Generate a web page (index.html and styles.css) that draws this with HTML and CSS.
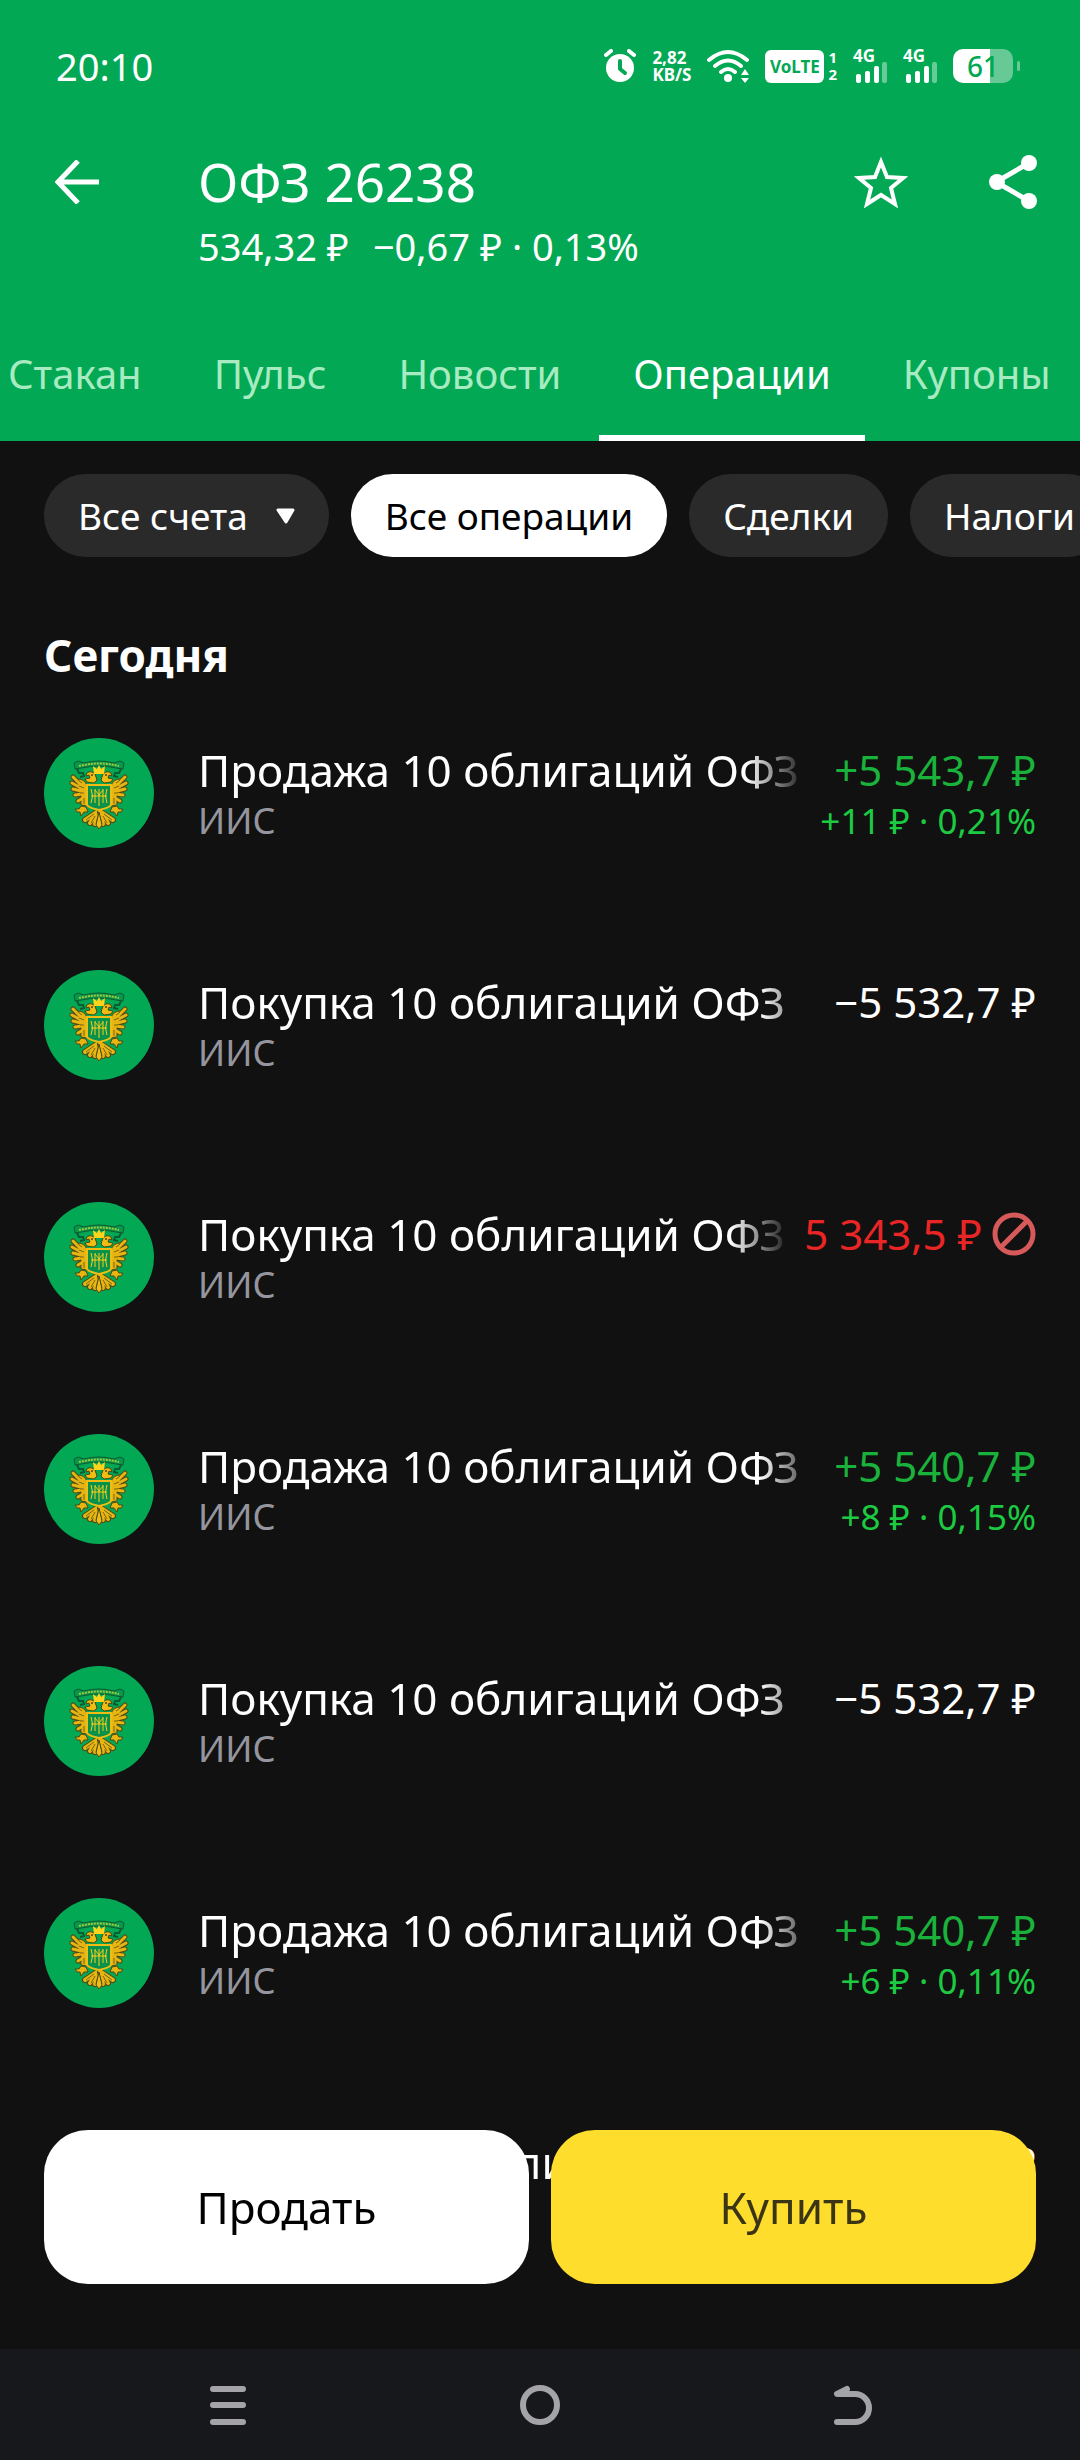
FILE: index.html
```html
<!DOCTYPE html>
<html lang="ru">
<head>
    <meta charset="UTF-8">
    <meta name="viewport" content="width=device-width, initial-scale=1.0">
    <title>ОФЗ 26238</title>
    <link rel="stylesheet" href="styles.css">
</head>

<body>

    <!-- shared icons -->
    <svg class="sprite" width="0" height="0" aria-hidden="true">
        <symbol id="emblem" viewBox="0 0 110 110">
            <circle cx="55" cy="55" r="55" fill="#03a854"/>
            <!-- ribbon -->
            <path d="M30 25l4-2 6 2q15-4 30 0l6-2 4 2-1 6-7-1q-17-4-34 0l-7 1z" fill="#08984c" stroke="#0c5a30" stroke-width="1"/>
            <path d="M35 28q20-5 40 0" fill="none" stroke="#a5c43a" stroke-width="2" stroke-dasharray="2 1"/>
            <g id="half">
                <path d="M33 31l2 4 4 0 1 3-4 1" fill="none" stroke="#0c5a30" stroke-width="2"/>
                <!-- wing feathers -->
                <path d="M37 47L29 39M37 50L28 45M37 53L29 51M38 56L31 57M39 60L34 63" stroke="#4d4a15" stroke-width="5" stroke-linecap="round"/>
                <path d="M34 41q7 0 9 7v20l-6-1 0-12-3-6z" fill="#e7b512" stroke="#4d4a15" stroke-width="1"/>
                <path d="M37 47L29 39M37 50L28 45M37 53L29 51M38 56L31 57M39 60L34 63" stroke="#e7b512" stroke-width="3" stroke-linecap="round"/>
                <path d="M38 45l-4-3M40 50l-5-2M40 55l-4 0M40 60v6" stroke="#756710" stroke-width="1"/>
                <!-- head -->
                <path d="M43 35q4-3 8 1l2 6-3 3-7-1-2-3 5-1-1-3-3 1z" fill="#f1bd12" stroke="#4d4a15" stroke-width="1"/>
                <circle cx="48" cy="37" r="1" fill="#4d4a15"/>
                <!-- claw -->
                <path d="M42 69l-5-1-2 3-4 0 2 3 3 0 1 4 3-4 4 0z" fill="#e7b512" stroke="#4d4a15" stroke-width="1"/>
                <!-- tail -->
                <path d="M53 74L41 82M53 74L46 85M54 74L51 86" stroke="#4d4a15" stroke-width="6" stroke-linecap="round"/>
                <path d="M53 74L41 82M53 74L46 85M54 74L51 86" stroke="#e7b512" stroke-width="4" stroke-linecap="round"/>
                <path d="M50 76l-8 6M51 78l-4 7M54 78l-2 8" stroke="#756710" stroke-width="1"/>
            </g>
            <use href="#half" transform="translate(110) scale(-1 1)"/>
            <path d="M55 74l3 13-3 4-3-4z" fill="#f0bd14" stroke="#4d4a15" stroke-width="1"/>
            <!-- crown -->
            <path d="M50 36l-1-8 4 3 2-4 2 4 4-3-1 8z" fill="#ffd21c"/>
            <!-- shield -->
            <path d="M43 47h24v20q-2 3-12 5-10-2-12-5z" fill="#07914a" stroke="#f0bd14" stroke-width="2"/>
            <path d="M47 51q3 7 0 14M63 51q-3 7 0 14M51 51v14M59 51v14M55 51v17M47 58h16M51 52l4 5 4-5" fill="none" stroke="#ffce1a" stroke-width="1"/>
        </symbol>
        <symbol id="signal" viewBox="0 0 34 34">
            <rect x="3" y="25" width="5" height="9" rx="2"/>
            <rect x="12" y="22" width="5" height="12" rx="2"/>
            <rect x="21" y="17" width="5" height="17" rx="2"/>
            <rect x="29" y="13" width="5" height="21" rx="2" opacity="0.4"/>
        </symbol>
    </svg>

    <header class="header">
        <div class="status-bar">
            <span class="clock">20:10</span>
            <div class="status-icons">
                <svg class="alarm" width="32" height="34" viewBox="0 0 32 34" fill="none">
                    <circle cx="16" cy="19" r="14" fill="#fff"/>
                    <path d="M2 6l5-4M30 6l-5-4" stroke="#fff" stroke-width="4" stroke-linecap="round"/>
                    <path d="M16 12v8l5 4" stroke="#03a854" stroke-width="4" stroke-linecap="round" stroke-linejoin="round"/>
                </svg>
                <span class="speed">2,82<br>KB/S</span>
                <svg class="wifi" width="42" height="34" viewBox="0 0 42 34" fill="none" stroke="#fff" stroke-width="4" stroke-linecap="round">
                    <path d="M2 11q19-16 38 0M8 17q13-11 26 0M14 23q7-6 14 0"/>
                    <circle cx="21" cy="29" r="4" fill="#fff" stroke="none"/>
                    <path d="M38 20l4 6h-8zM38 34l4-5h-8z" fill="#fff" stroke="none"/>
                </svg>
                <span class="volte">VoLTE</span>
                <span class="sim">1<br>2</span>
                <span class="network">4G<svg width="34" height="34"><use href="#signal"/></svg></span>
                <span class="network">4G<svg width="34" height="34"><use href="#signal"/></svg></span>
                <span class="battery">61</span>
            </div>
        </div>

        <div class="title-bar">
            <button class="icon-btn back" aria-label="Назад">
                <svg width="44" height="44" viewBox="0 0 44 44" fill="none" stroke="#fff" stroke-width="5">
                    <path d="M23 1L3 22l20 21M3 22h41"/>
                </svg>
            </button>
            <div class="title-text">
                <h1>ОФЗ 26238</h1>
                <p><span>534,32 ₽</span><span>−0,67 ₽ · 0,13%</span></p>
            </div>
            <button class="icon-btn" aria-label="В избранное">
                <svg width="54" height="52" viewBox="0 0 54 52" fill="none" stroke="#fff" stroke-width="4">
                    <path d="M27 6l6 15 16 1-12 10 4 16-14-9-14 9 4-16L5 22l16-1z"/>
                </svg>
            </button>
            <button class="icon-btn" aria-label="Поделиться">
                <svg width="50" height="56" viewBox="0 0 50 56" fill="#fff">
                    <path d="M41 9L8 28l33 19" fill="none" stroke="#fff" stroke-width="5"/>
                    <circle cx="41" cy="9" r="8"/>
                    <circle cx="9" cy="28" r="8"/>
                    <circle cx="41" cy="47" r="8"/>
                </svg>
            </button>
        </div>

        <nav class="tabs">
            <a href="#">Стакан</a>
            <a href="#">Пульс</a>
            <a href="#">Новости</a>
            <a href="#" class="active">Операции</a>
            <a href="#">Купоны</a>
        </nav>
    </header>

    <main>
        <div class="filters">
            <button class="chip">Все счета
                <svg width="19" height="16" viewBox="0 0 19 16" fill="#fff" stroke="#fff" stroke-width="3" stroke-linejoin="round"><path d="M2 2h15l-7 12z"/></svg>
            </button>
            <button class="chip selected">Все операции</button>
            <button class="chip">Сделки</button>
            <button class="chip">Налоги</button>
        </div>

        <h2>Сегодня</h2>

        <ul class="operations">
            <li class="operation">
                <svg class="avatar"><use href="#emblem"/></svg>
                <div class="info">
                    <p class="name">Продажа 10 облигаций ОФЗ</p>
                    <p class="account">ИИС</p>
                </div>
                <div class="sum">
                    <p class="amount income">+5 543,7 ₽</p>
                    <p class="profit">+11 ₽ · 0,21%</p>
                </div>
            </li>
            <li class="operation">
                <svg class="avatar"><use href="#emblem"/></svg>
                <div class="info">
                    <p class="name">Покупка 10 облигаций ОФЗ</p>
                    <p class="account">ИИС</p>
                </div>
                <div class="sum">
                    <p class="amount">−5 532,7 ₽</p>
                </div>
            </li>
            <li class="operation">
                <svg class="avatar"><use href="#emblem"/></svg>
                <div class="info">
                    <p class="name">Покупка 10 облигаций ОФЗ</p>
                    <p class="account">ИИС</p>
                </div>
                <div class="sum">
                    <p class="amount declined">5 343,5 ₽
                        <svg width="44" height="44" viewBox="0 0 44 44" fill="none" stroke="#d65a5a" stroke-width="5">
                            <circle cx="22" cy="22" r="19"/>
                            <path d="M9 35L35 9"/>
                        </svg>
                    </p>
                </div>
            </li>
            <li class="operation">
                <svg class="avatar"><use href="#emblem"/></svg>
                <div class="info">
                    <p class="name">Продажа 10 облигаций ОФЗ</p>
                    <p class="account">ИИС</p>
                </div>
                <div class="sum">
                    <p class="amount income">+5 540,7 ₽</p>
                    <p class="profit">+8 ₽ · 0,15%</p>
                </div>
            </li>
            <li class="operation">
                <svg class="avatar"><use href="#emblem"/></svg>
                <div class="info">
                    <p class="name">Покупка 10 облигаций ОФЗ</p>
                    <p class="account">ИИС</p>
                </div>
                <div class="sum">
                    <p class="amount">−5 532,7 ₽</p>
                </div>
            </li>
            <li class="operation">
                <svg class="avatar"><use href="#emblem"/></svg>
                <div class="info">
                    <p class="name">Продажа 10 облигаций ОФЗ</p>
                    <p class="account">ИИС</p>
                </div>
                <div class="sum">
                    <p class="amount income">+5 540,7 ₽</p>
                    <p class="profit">+6 ₽ · 0,11%</p>
                </div>
            </li>
            <li class="operation">
                <svg class="avatar"><use href="#emblem"/></svg>
                <div class="info">
                    <p class="name">Продажа 10 облигаций ОФЗ</p>
                </div>
                <div class="sum">
                    <p class="amount">₽</p>
                </div>
            </li>
        </ul>
    </main>

    <footer class="bottom">
        <div class="actions">
            <button class="sell">Продать</button>
            <button class="buy">Купить</button>
        </div>
        <div class="system-nav">
            <button aria-label="Меню">
                <svg width="40" height="40" viewBox="0 0 40 40"><path d="M5 4h30M5 20h30M5 37h30"/></svg>
            </button>
            <button aria-label="Домой">
                <svg width="40" height="40" viewBox="0 0 40 40"><circle cx="20" cy="20" r="17"/></svg>
            </button>
            <button aria-label="Назад">
                <svg width="40" height="40" viewBox="0 0 40 40"><path d="M15 4L5 9h18a14 14 0 0 1 0 28H5"/></svg>
            </button>
        </div>
    </footer>

</body>
</html>
```
FILE: styles.css
```css
* {
    box-sizing: border-box;
    margin: 0;
    padding: 0;
}

body {
    font-family: "Noto Sans", sans-serif;
    background-color: #111;
    color: #fff;
    min-height: 100vh;
    overflow-x: hidden;
}

button {
    font-family: inherit;
    color: inherit;
    border: none;
    background: none;
    cursor: pointer;
}

svg {
    display: block;
    flex-shrink: 0;
}

.sprite {
    position: absolute;
}

/* header */
.header {
    background-color: #03a854;
    padding-top: 42px;
}

.status-bar {
    display: flex;
    justify-content: space-between;
    align-items: center;
    padding: 0 67px 0 56px;
    height: 48px;
}

.clock {
    font-size: 38px;
    line-height: 48px;
}

.status-icons {
    display: flex;
    align-items: center;
    gap: 16px;
    font-weight: bold;
}

.speed {
    font-size: 17px;
    line-height: 17px;
}

.volte {
    width: 59px;
    font-size: 17px;
    line-height: 33px;
    text-align: center;
    border-radius: 6px;
    background-color: #fff;
    color: #03a854;
}

.sim {
    margin-left: -12px;
    font-size: 15px;
    line-height: 17px;
}

.network {
    position: relative;
    width: 34px;
    height: 34px;
    font-size: 17px;
    line-height: 14px;
}

.network svg {
    position: absolute;
    top: 0;
    left: 0;
    fill: #fff;
}

.battery {
    position: relative;
    width: 60px;
    height: 34px;
    border-radius: 10px;
    background: linear-gradient(to right, #fff 62%, #67c995 62%);
    color: #03a854;
    font-size: 28px;
    font-weight: 500;
    line-height: 34px;
    text-align: center;
}

.battery::after {
    content: "";
    position: absolute;
    top: 12px;
    right: -7px;
    width: 3px;
    height: 10px;
    border-radius: 2px;
    background-color: #67c995;
}

.title-bar {
    display: flex;
    align-items: flex-start;
    padding: 62px 40px 0 44px;
}

.icon-btn {
    display: flex;
    justify-content: center;
    align-items: center;
    width: 54px;
    height: 60px;
    margin-left: 78px;
}

.back {
    width: 66px;
    margin: 0 88px 0 0;
}

.title-text {
    flex: 1;
}

h1 {
    font-size: 53px;
    font-weight: normal;
    line-height: 60px;
}

.title-text p {
    display: flex;
    gap: 24px;
    margin-top: 10px;
    font-size: 38px;
    line-height: 48px;
    white-space: nowrap;
}

.tabs {
    display: flex;
    gap: 4px;
    padding: 80px 0 0 8px;
    overflow: hidden;
}

.tabs a {
    padding: 0 34px 37px;
    border-bottom: 6px solid transparent;
    color: #a8ebc2;
    font-size: 40px;
    line-height: 48px;
    text-decoration: none;
}

.tabs a:first-child {
    padding-left: 0;
}

.tabs .active {
    color: #fff;
    border-color: #fff;
}

/* filters */
.filters {
    display: flex;
    gap: 22px;
    padding: 33px 0 0 44px;
    overflow: hidden;
}

.chip {
    display: flex;
    align-items: center;
    flex-shrink: 0;
    gap: 28px;
    padding: 18px 34px;
    border-radius: 42px;
    background-color: #2a2a2a;
    font-size: 37px;
    line-height: 47px;
}

.selected {
    background-color: #fff;
    color: #000;
}

h2 {
    padding: 70px 44px 55px;
    font-size: 44px;
    line-height: 56px;
}

/* operations */
.operations {
    list-style: none;
    padding: 0 44px;
}

.operation {
    display: flex;
    min-height: 232px;
}

.avatar {
    width: 110px;
    height: 110px;
    margin-right: 44px;
}

.info {
    flex: 1;
    min-width: 0;
    padding-top: 2px;
}

.name {
    font-size: 44px;
    line-height: 60px;
    white-space: nowrap;
    overflow: hidden;
    -webkit-mask-image: linear-gradient(to left, transparent, #000 60px);
    mask-image: linear-gradient(to left, transparent, #000 60px);
}

.account {
    color: #95959e;
    font-size: 36px;
    line-height: 42px;
}

.sum {
    padding: 2px 0 0 14px;
    text-align: right;
    white-space: nowrap;
}

.amount {
    display: flex;
    justify-content: flex-end;
    align-items: center;
    gap: 10px;
    font-size: 42px;
    line-height: 60px;
}

.income {
    color: #1bb23c;
}

.declined {
    color: #ea2525;
}

.profit {
    color: #1ccb42;
    font-size: 35px;
    line-height: 42px;
}

/* buttons over the list */
.bottom {
    position: fixed;
    left: 0;
    right: 0;
    bottom: 0;
}

.actions {
    display: flex;
    gap: 22px;
    padding: 0 44px 65px;
}

.actions button {
    flex: 1;
    padding: 49px 0;
    border-radius: 44px;
    font-size: 44px;
    line-height: 56px;
}

.actions .sell {
    background-color: #fff;
    color: #000;
}

.actions .buy {
    background-color: #ffdd2d;
    color: #3a3514;
}

.system-nav {
    display: flex;
    justify-content: space-around;
    padding: 36px 72px 35px;
    background-color: #17181c;
}

.system-nav svg {
    fill: none;
    stroke: #a3a3a8;
    stroke-width: 6;
    stroke-linecap: round;
    stroke-linejoin: round;
}
```
